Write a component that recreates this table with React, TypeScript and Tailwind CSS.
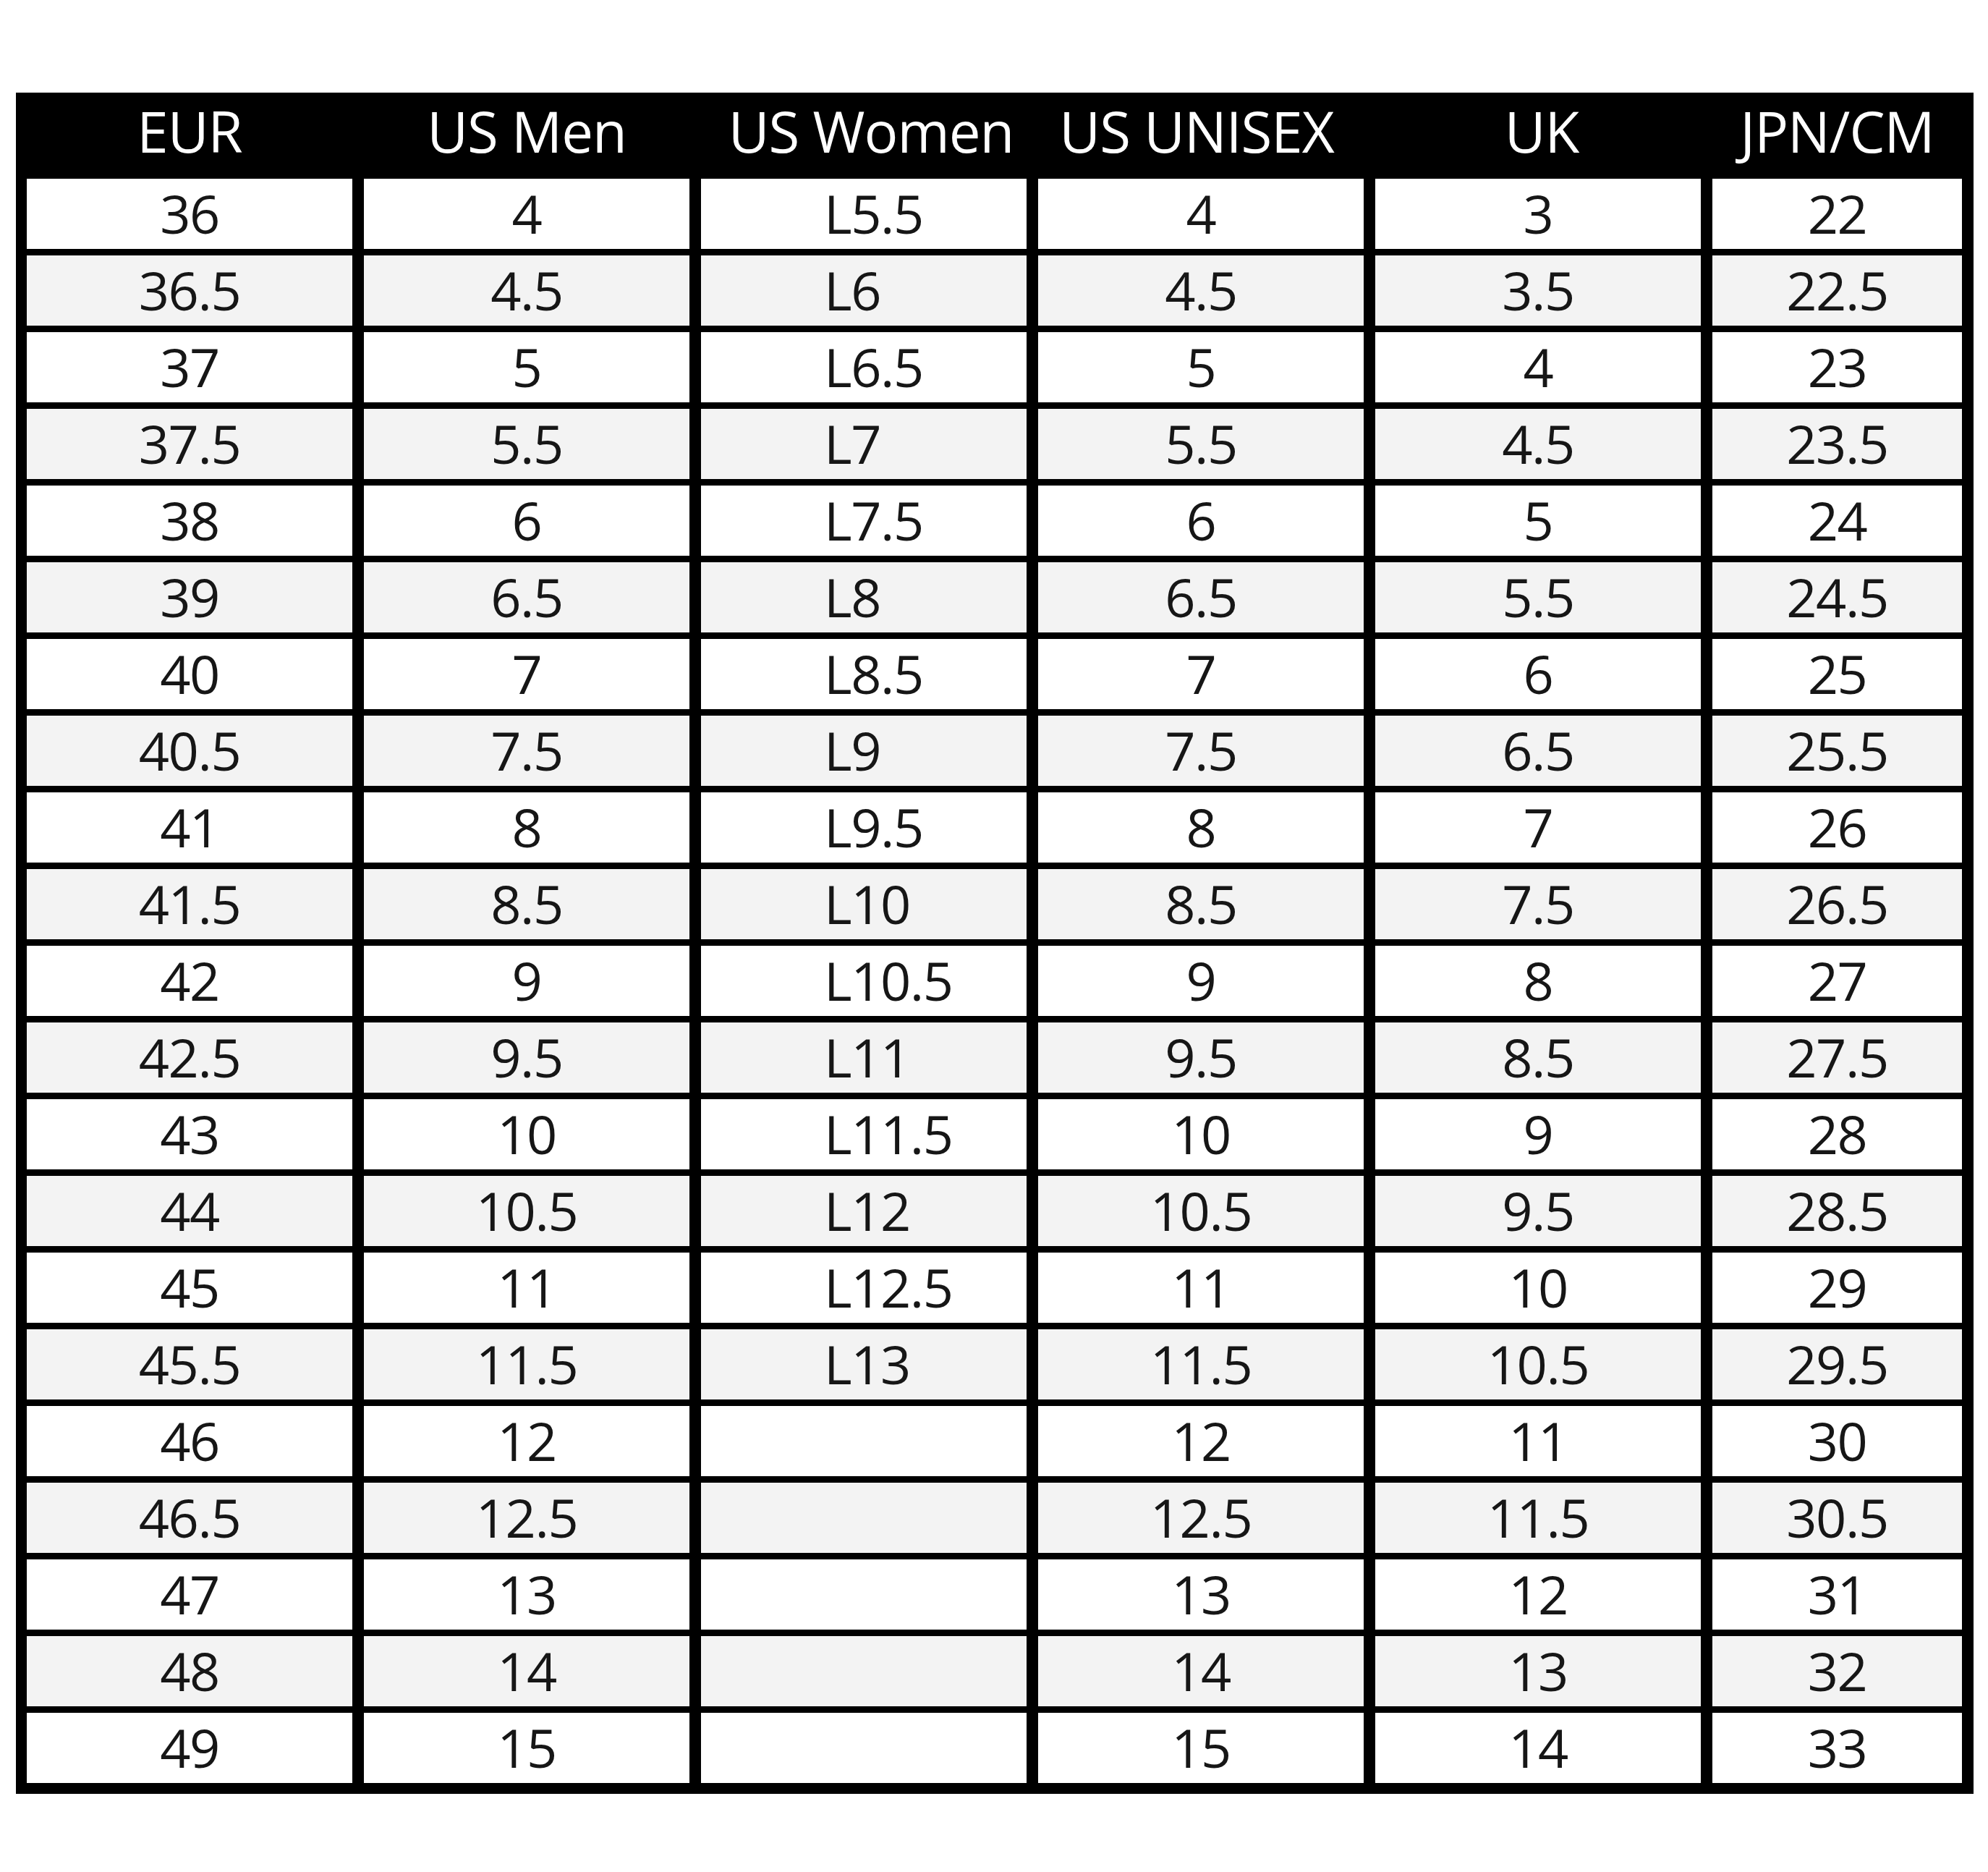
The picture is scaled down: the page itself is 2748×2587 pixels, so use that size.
const headers = [
  { label: "EUR", cls: "" },
  { label: "US Men", cls: "" },
  { label: "US Women", cls: "translate-x-[10px]" },
  { label: "US UNISEX", cls: "-translate-x-[6px]" },
  { label: "UK", cls: "translate-x-[5px]" },
  { label: "JPN/CM", cls: "" },
];

const eur = ["36", "36.5", "37", "37.5", "38", "39", "40", "40.5", "41", "41.5", "42", "42.5", "43", "44", "45", "45.5", "46", "46.5", "47", "48", "49"];
const usMen = ["4", "4.5", "5", "5.5", "6", "6.5", "7", "7.5", "8", "8.5", "9", "9.5", "10", "10.5", "11", "11.5", "12", "12.5", "13", "14", "15"];
const usWomen = ["L5.5", "L6", "L6.5", "L7", "L7.5", "L8", "L8.5", "L9", "L9.5", "L10", "L10.5", "L11", "L11.5", "L12", "L12.5", "L13", "", "", "", "", ""];
const uk = ["3", "3.5", "4", "4.5", "5", "5.5", "6", "6.5", "7", "7.5", "8", "8.5", "9", "9.5", "10", "10.5", "11", "11.5", "12", "13", "14"];
const jpn = ["22", "22.5", "23", "23.5", "24", "24.5", "25", "25.5", "26", "26.5", "27", "27.5", "28", "28.5", "29", "29.5", "30", "30.5", "31", "32", "33"];

const rows = eur.map((e, i) => [e, usMen[i], usWomen[i], usMen[i], uk[i], jpn[i]]);

export default function App() {
  return (
    <div className="w-full h-[2587px] bg-white pt-[128px] pl-[22px]" style={{ fontFamily: '"Open Sans", "Noto Sans", sans-serif' }}>
      <div className="w-[2706px] bg-black pl-[15px] pr-[16px] pb-[15px]">
        {/* Header */}
        <div className="grid grid-cols-[450px_450px_450px_450px_450px_345px] gap-x-[16px] h-[119px] items-center text-white text-[78px] leading-none pb-[14px]">
          {headers.map((h) => (
            <div key={h.label} className={`text-center whitespace-nowrap tracking-[-1px] ${h.cls}`}>
              {h.label}
            </div>
          ))}
        </div>

        {/* Body rows */}
        <div className="flex flex-col gap-y-[9px]">
          {rows.map((r, i) => (
            <div key={i} className="grid grid-cols-[450px_450px_450px_450px_450px_345px] gap-x-[16px]">
              {r.map((v, j) => (
                <div
                  key={j}
                  className={`h-[97px] flex items-center text-[74px] leading-none text-[#161616] tracking-[-1.5px] pb-[2px] ${
                    i % 2 === 1 ? "bg-[#f3f3f3]" : "bg-white"
                  } ${j === 2 ? "justify-start pl-[170px]" : "justify-center"}`}
                >
                  {v}
                </div>
              ))}
            </div>
          ))}
        </div>
      </div>
    </div>
  );
}
